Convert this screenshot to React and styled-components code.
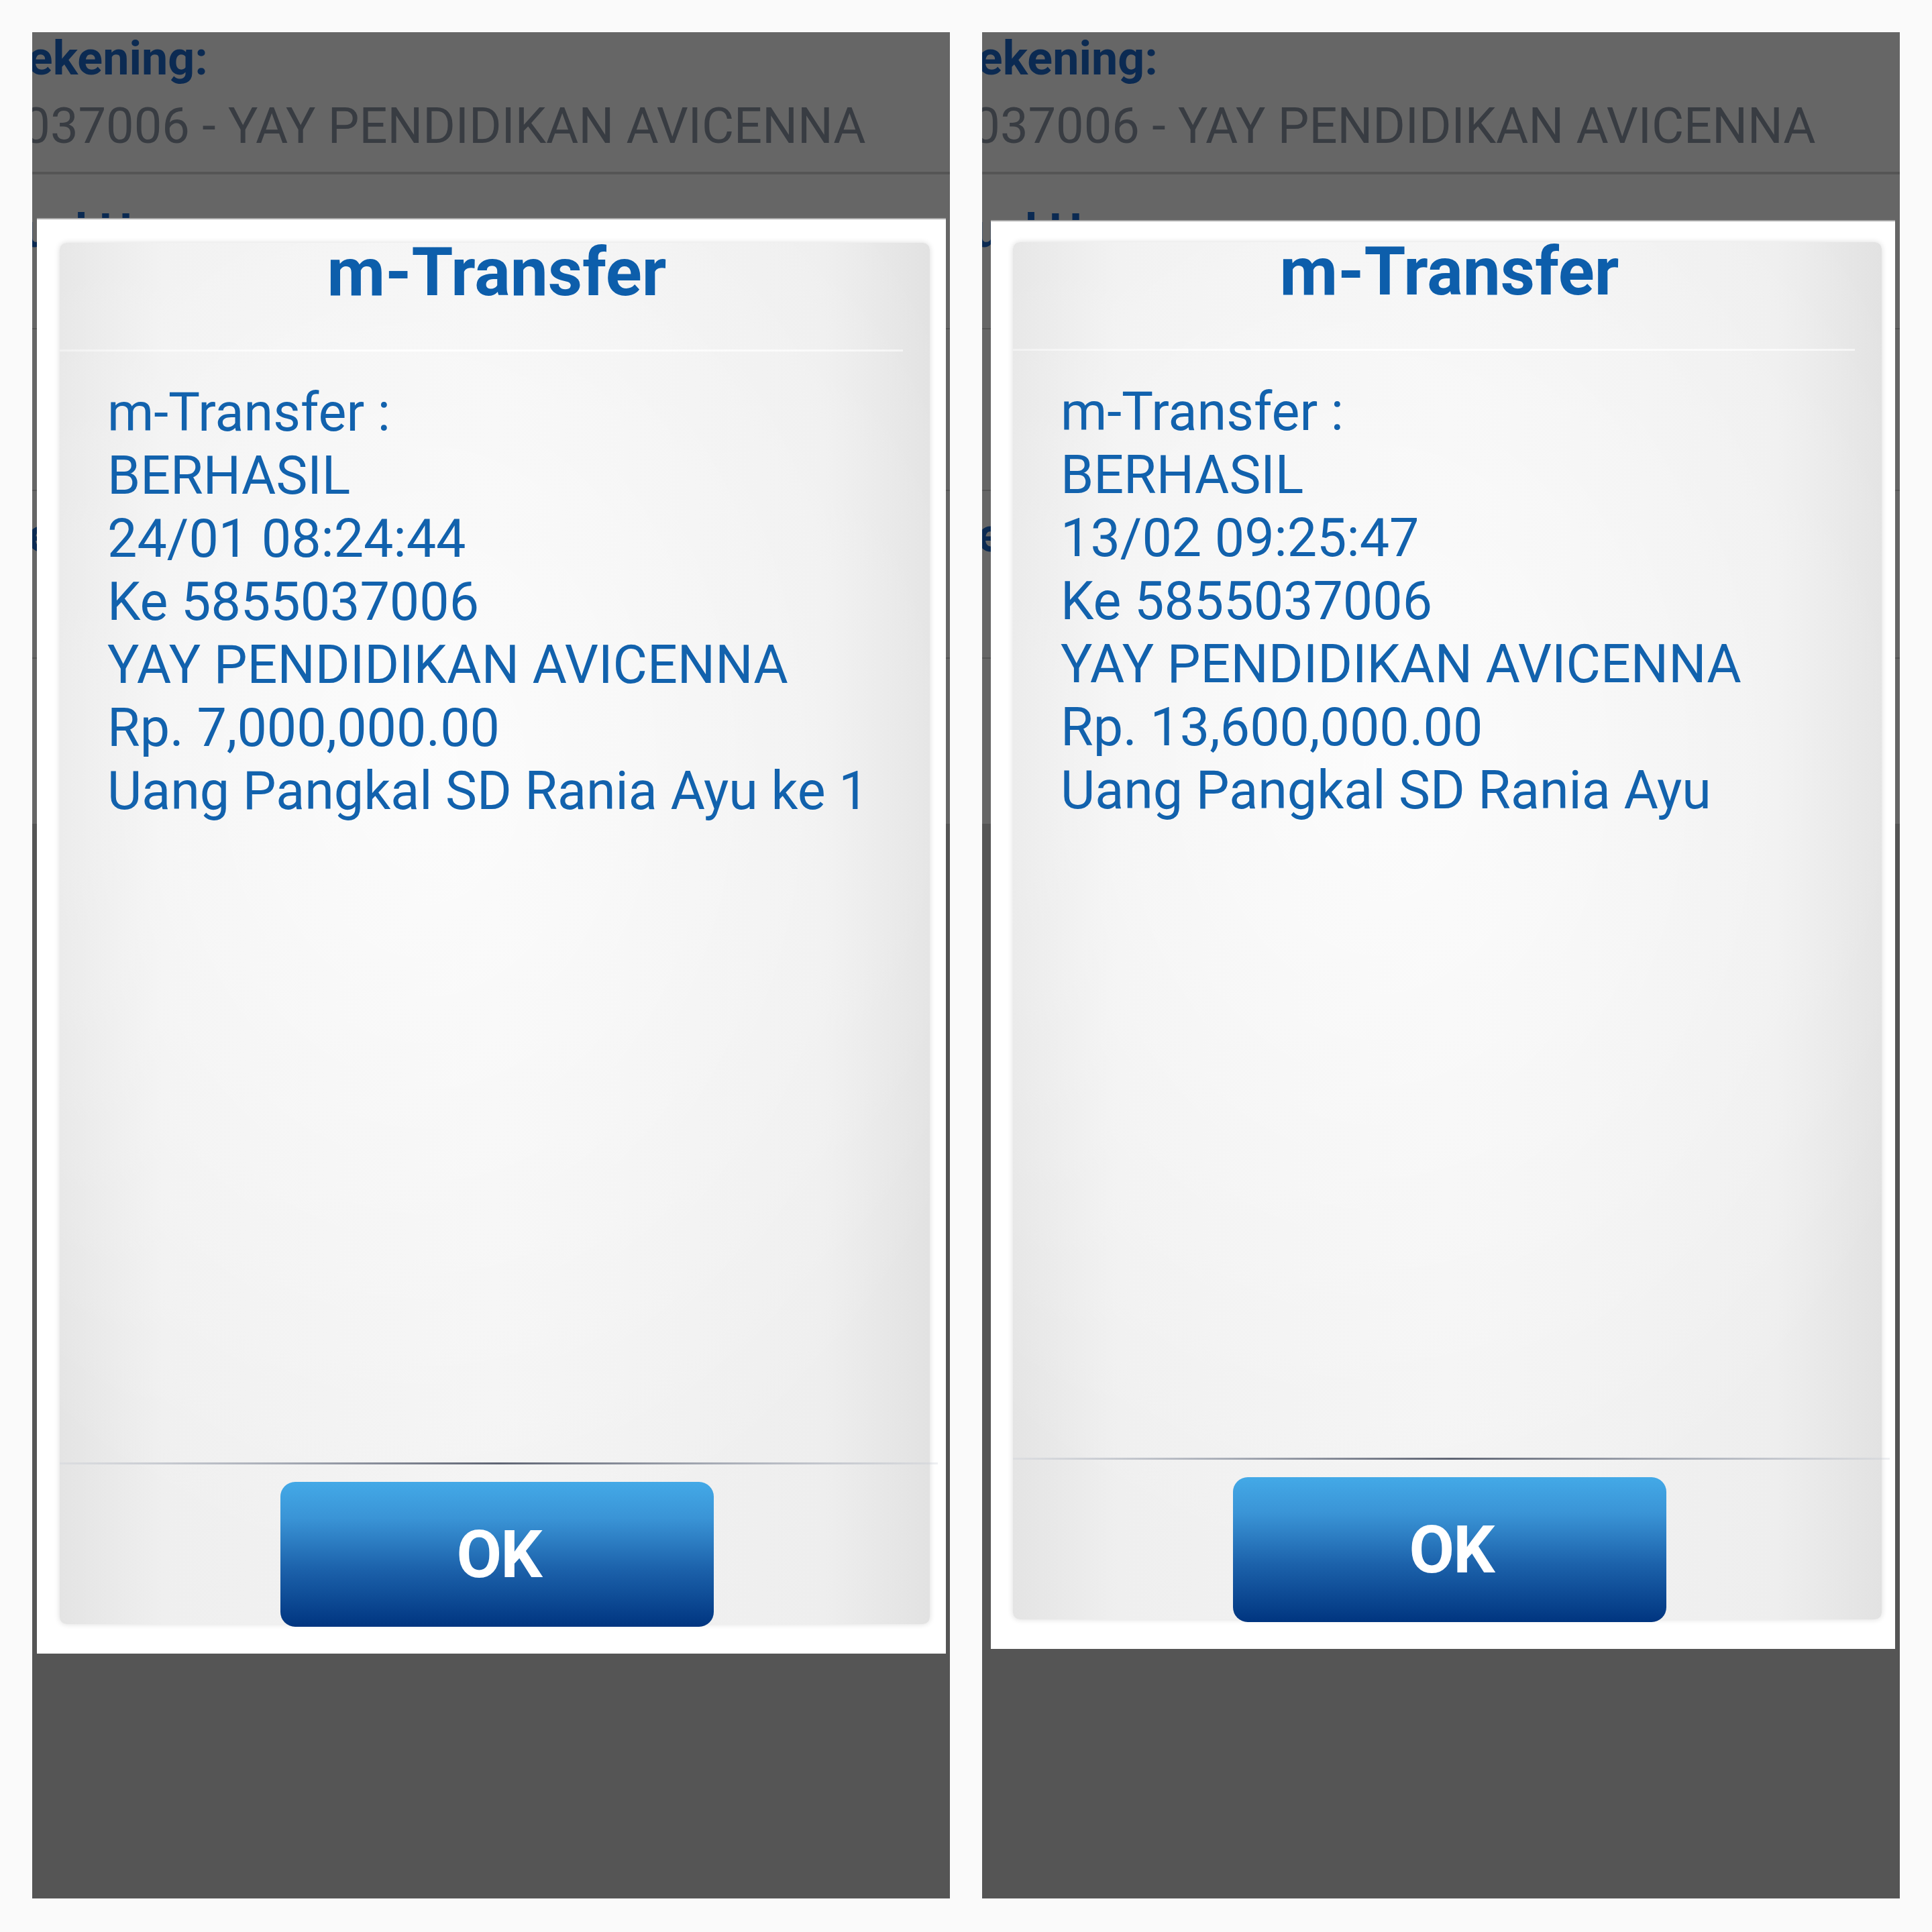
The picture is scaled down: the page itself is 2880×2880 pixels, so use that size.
import React from 'react';
import styled, { createGlobalStyle } from 'styled-components';

const GlobalStyle = createGlobalStyle`
  body {
    margin: 0;
    background: #fafafa;
  }
`;

const Page = styled.div`
  width: 2880px;
  height: 2880px;
  box-sizing: border-box;
  padding: 48px;
  display: flex;
  gap: 48px;
  background: #fafafa;
  font-family: Roboto, "Noto Sans", sans-serif;
`;

const Phone = styled.div`
  position: relative;
  width: 1368px;
  height: 2782px;
  overflow: hidden;
  background: #555555;
`;

// dimmed screen lying under the dialog
const Screen = styled.div`
  display: flex;
  flex-direction: column;
  background: #666666;
  height: 1180px;
`;

const Field = styled.div`
  height: ${(p) => p.$height}px;
  border-bottom: ${(p) => p.$border || 2}px solid #555;
  flex-shrink: 0;
  overflow: hidden;
`;

const FieldLabel = styled.div`
  margin-left: -52px;
  margin-top: ${(p) => p.$top || 0}px;
  font-size: 70px;
  line-height: 72px;
  font-weight: 700;
  color: #0b2a52;
  white-space: nowrap;
`;

const FieldValue = styled.div`
  margin-left: -181px;
  margin-top: 15px;
  font-size: 74px;
  line-height: 100px;
  color: #383c42;
  white-space: nowrap;
`;

const Dialog = styled.div`
  position: absolute;
  top: ${(p) => p.$top}px;
  left: ${(p) => p.$left}px;
  right: ${(p) => p.$right}px;
  bottom: ${(p) => p.$bottom}px;
  box-sizing: border-box;
  padding: ${(p) => p.$pad};
  display: flex;
  background: #ffffff;
  border-top: 2px solid #a9a9a9;
`;

const Card = styled.div`
  flex: 1;
  display: flex;
  flex-direction: column;
  border-radius: 10px;
  background:
    radial-gradient(ellipse 70% 60% at 42% 38%, rgba(255, 255, 255, 0.75) 0%, rgba(255, 255, 255, 0) 100%),
    linear-gradient(90deg, #e4e4e4 0%, #efefef 12%, #f3f3f3 50%, #eeeeee 88%, #e2e2e2 100%);
  box-shadow: 0 0 8px rgba(0, 0, 0, 0.14);
`;

const Header = styled.div`
  height: 162px;
  flex-shrink: 0;
  display: flex;
  justify-content: center;
  position: relative;
  &::after {
    content: '';
    position: absolute;
    left: 0;
    right: 40px;
    bottom: 0;
    height: 3px;
    background: linear-gradient(90deg, rgba(255, 255, 255, 0.4), #ffffff 40%, rgba(255, 255, 255, 0.6));
  }
`;

const Title = styled.div`
  padding-left: 6px;
  font-size: 100px;
  line-height: 88px;
  font-weight: 700;
  color: #0d5eab;
`;

const Message = styled.div`
  flex: 1;
  padding: 44px 0 0 71px;
  font-size: 79px;
  line-height: 94px;
  color: #1262ad;
  white-space: nowrap;
`;

const Footer = styled.div`
  display: flex;
  flex-direction: column;
  align-items: center;
  margin-bottom: -4px;
`;

const Rule = styled.div`
  align-self: stretch;
  height: 3px;
  margin-right: -12px;
  background: linear-gradient(90deg, rgba(200, 205, 215, 0.3) 0%, #a7acb6 25%, #5f6574 50%, #a7acb6 75%, rgba(200, 205, 215, 0.3) 100%);
`;

const OkButton = styled.button`
  margin-top: 26px;
  margin-left: 6px;
  width: 646px;
  height: 216px;
  border: none;
  border-radius: 22px;
  background: linear-gradient(180deg, #43a9e7 0%, #3a94d6 25%, #1c62ab 60%, #003580 100%);
  color: #ffffff;
  font-family: Roboto, "Liberation Sans", sans-serif;
  font-size: 98px;
  font-weight: 700;
  letter-spacing: -2px;
  padding: 0 0 0 6px;
`;

const receipts = [
  {
    dialog: { top: 277, left: 7, right: 6, bottom: 365, pad: '35px 24px 44px 34px' },
    lines: [
      'm-Transfer :',
      'BERHASIL',
      '24/01 08:24:44',
      'Ke 5855037006',
      'YAY PENDIDIKAN AVICENNA',
      'Rp. 7,000,000.00',
      'Uang Pangkal SD Rania Ayu ke 1',
    ],
  },
  {
    dialog: { top: 280, left: 13, right: 7, bottom: 372, pad: '31px 20px 44px 33px' },
    lines: [
      'm-Transfer :',
      'BERHASIL',
      '13/02 09:25:47',
      'Ke 5855037006',
      'YAY PENDIDIKAN AVICENNA',
      'Rp. 13,600,000.00',
      'Uang Pangkal SD Rania Ayu',
    ],
  },
];

function Receipt({ dialog, lines }) {
  return (
    <Phone>
      <Screen>
        <Field $height={208} $border={4}>
          <FieldLabel $top={3}>Rekening:</FieldLabel>
          <FieldValue>5855037006 - YAY PENDIDIKAN AVICENNA</FieldValue>
        </Field>
        <Field $height={229}>
          <FieldLabel $top={48}>Jual Harga:</FieldLabel>
        </Field>
        <Field $height={239} />
        <Field $height={248}>
          <FieldLabel $top={30}>Berita:</FieldLabel>
        </Field>
      </Screen>
      <Dialog
        $top={dialog.top}
        $left={dialog.left}
        $right={dialog.right}
        $bottom={dialog.bottom}
        $pad={dialog.pad}
      >
        <Card>
          <Header>
            <Title>m-Transfer</Title>
          </Header>
          <Message>
            {lines.map((line) => (
              <div key={line}>{line}</div>
            ))}
          </Message>
          <Footer>
            <Rule />
            <OkButton>OK</OkButton>
          </Footer>
        </Card>
      </Dialog>
    </Phone>
  );
}

export default function App() {
  return (
    <Page>
      <GlobalStyle />
      {receipts.map((r, i) => (
        <Receipt key={i} dialog={r.dialog} lines={r.lines} />
      ))}
    </Page>
  );
}
